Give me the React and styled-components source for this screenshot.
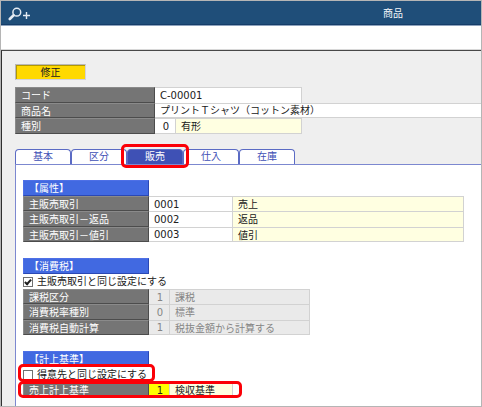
import React, { useState } from "react";
import styled, { createGlobalStyle, css } from "styled-components";

const GlobalStyle = createGlobalStyle`
  *, *::before, *::after { box-sizing: border-box; }
  body { margin: 0; background: #fff; }
  body, button, input, output {
    font-family: "DejaVu Sans", "Noto Sans CJK JP", sans-serif;
    font-size: 10px;
    line-height: 14px;
    color: #202020;
  }
`;

const Frame = styled.div`
  display: flex;
  flex-direction: column;
  min-height: 100vh;
  border: 1px solid #b5b5b5;
  background: #fff;
`;

const TitleBar = styled.header`
  display: flex;
  align-items: center;
  height: 25px;
  padding: 2px 0 0 7px;
  background: #1f4e79;
  border-bottom: 1px solid #8ea3bd;
  box-shadow: inset 0 -1px #153d69;
`;

const SearchButton = styled.button`
  display: flex;
  padding: 0;
  border: 0;
  background: none;
`;

const Title = styled.h1`
  flex: 1;
  margin: 0;
  padding-right: 78px;
  font-size: 10px;
  font-weight: 400;
  line-height: 22px;
  text-align: right;
  color: #f4f7fa;
`;

const Toolbar = styled.div`
  height: 24px;
  border-bottom: 1px solid #d8d8d8;
`;

const Body = styled.main`
  flex: 1;
  display: flex;
  flex-direction: column;
  padding: 13px 0 0 13px;
  border-top: 1px solid #484848;
  border-left: 1px solid #303030;
  background: #efefef;
`;

const ModeButton = styled.button`
  align-self: flex-start;
  width: 71px;
  height: 16px;
  padding: 0;
  border: 1px solid;
  border-color: #b8b8b8 #d2d2dc #d2d2dc #b8b8b8;
  background: #ffd900;
  box-shadow: inset 1px 1px #b39900;
  line-height: 13px;
`;

const Fields = styled.div`
  display: grid;
  grid-auto-rows: 1fr;
  height: ${(p) => (p.$single ? 16 : 46)}px;
`;

const Summary = styled(Fields)`
  height: 47px;
  margin: 7px 0 15px;
`;

const Row = styled.div`
  position: relative;
  display: flex;
  justify-self: ${(p) => (p.$fill ? "stretch" : "start")};
  min-width: 0;
  min-height: 0;
`;

const caption = css`
  padding-left: 5px;
  border: 1px solid;
  border-color: #8a8a8a #4c4c4c #4c4c4c #8a8a8a;
  background: #757575;
  color: #fff;
  line-height: 15px;
  white-space: nowrap;
  overflow: hidden;
`;

const Caption = styled.label`
  ${caption}
  width: ${(p) => (p.$wide ? 140 : 126)}px;
`;

const SectionTitle = styled.h2`
  ${caption}
  width: 126px;
  height: 16px;
  margin: 0;
  border-color: #4e70e6 #2a48b4 #2a48b4 #4e70e6;
  background: #4169e1;
  font-size: 10px;
  font-weight: 400;
`;

const widths = { code: 21, long: 84, short: 63, text: 147, kind: 126, tax: 140, name: 231 };
const tones = { plain: "#fff", note: "#ffffe1", active: "#ffff00", off: "#eaeaea" };

const box = css`
  width: ${(p) => widths[p.$size]}px;
  min-width: 0;
  min-height: 0;
  padding: 1px 0 0 5px;
  border: solid #d2d2d2;
  border-width: 1px 1px 0 0;
  border-radius: 0;
  background: ${(p) => tones[p.$tone || "plain"]};
  color: ${(p) => (p.$tone === "off" ? "#858585" : "#202020")};
  line-height: 14px;
  outline: none;
  ${Row}:last-child > & { border-bottom-width: 1px; }
`;

const Input = styled.input`
  ${box}
  ${(p) => p.$size === "code" && "padding: 1px 6px 0 0; text-align: right;"}
  ${(p) => p.$size === "fill" && "flex: 1; width: auto; border-right: 0; border-bottom-width: 1px;"}
`;

const Display = styled.output`
  ${box}
  display: block;
  white-space: nowrap;
  overflow: hidden;
`;

const Tabs = styled.div`
  display: flex;
  height: 15px;
`;

const Tab = styled.button`
  position: relative;
  width: 56px;
  padding: 0;
  border: 1px solid #5b6bc4;
  border-bottom: 0;
  border-radius: 4px 4px 0 0;
  background: ${(p) => (p.$active ? "#3f51b5" : "#fff")};
  color: ${(p) => (p.$active ? "#fff" : "#3f51b5")};
  line-height: 14px;
`;

const Panel = styled.div`
  flex: 1;
  display: flex;
  flex-direction: column;
  gap: 16px;
  padding: 15px 16px 6px 7px;
  border: solid #7c88d0;
  border-width: 1px 0 0 1px;
  background: #fff;
`;

const CheckRow = styled.label`
  position: relative;
  display: flex;
  align-items: center;
  gap: 4px;
  width: max-content;
  height: 15px;
`;

const Check = styled.input`
  appearance: none;
  display: grid;
  place-items: center;
  width: 10px;
  height: 10px;
  margin: 0;
  border: 1px solid #707070;
  background: #fff;
  &:checked::before {
    content: "";
    width: 4px;
    height: 7px;
    border: solid #202020;
    border-width: 0 2px 2px 0;
    transform: rotate(42deg);
  }
`;

const Highlight = styled.span`
  position: absolute;
  z-index: 1;
  inset: ${(p) => p.$inset};
  border: 3px solid #fb0007;
  border-radius: 5px;
  pointer-events: none;
`;

function SearchPlus() {
  return (
    <svg width="23" height="15" viewBox="0 0 23 15" fill="none" stroke="#e4ebf3">
      <circle cx="8.8" cy="5.2" r="3.9" strokeWidth="1.5" />
      <path d="M5.6 8.3 L1.8 12" strokeWidth="2.6" strokeLinecap="round" />
      <path d="M15 8.5 H22 M18.5 5 V12" strokeWidth="1.4" />
    </svg>
  );
}

function CodeRow({ id, label, code, name, size = "code", nameSize, tone, nameTone = "note", disabled, wide, children }) {
  return (
    <Row>
      <Caption htmlFor={id} $wide={wide}>{label}</Caption>
      <Input id={id} defaultValue={code} $size={size} $tone={tone} disabled={disabled} />
      <Display htmlFor={id} $size={nameSize} $tone={nameTone}>{name}</Display>
      {children}
    </Row>
  );
}

const tabNames = ["基本", "区分", "販売", "仕入", "在庫"];

export default function App() {
  const [active, setActive] = useState("販売");
  return (
    <>
      <GlobalStyle />
      <Frame>
        <TitleBar>
          <SearchButton aria-label="検索"><SearchPlus /></SearchButton>
          <Title>商品</Title>
        </TitleBar>
        <Toolbar />
        <Body>
          <ModeButton>修正</ModeButton>
          <Summary>
            <Row>
              <Caption htmlFor="item-code" $wide>コード</Caption>
              <Input id="item-code" defaultValue="C-00001" $size="text" />
            </Row>
            <Row $fill>
              <Caption htmlFor="item-name" $wide>商品名</Caption>
              <Input id="item-name" defaultValue="プリントＴシャツ（コットン素材）" $size="fill" />
            </Row>
            <CodeRow id="item-kind" label="種別" code="0" name="有形" nameSize="kind" wide />
          </Summary>
          <Tabs role="tablist">
            {tabNames.map((name) => (
              <Tab key={name} role="tab" aria-selected={name === active} $active={name === active} onClick={() => setActive(name)}>
                {name}
                {name === "販売" && <Highlight $inset="-6px -7px -4px -7px" />}
              </Tab>
            ))}
          </Tabs>
          <Panel role="tabpanel">
            <section>
              <SectionTitle>【属性】</SectionTitle>
              <Fields>
                <CodeRow id="deal" label="主販売取引" code="0001" name="売上" size="long" nameSize="name" />
                <CodeRow id="deal-return" label="主販売取引－返品" code="0002" name="返品" size="long" nameSize="name" />
                <CodeRow id="deal-discount" label="主販売取引－値引" code="0003" name="値引" size="long" nameSize="name" />
              </Fields>
            </section>
            <section>
              <SectionTitle>【消費税】</SectionTitle>
              <CheckRow>
                <Check type="checkbox" defaultChecked />
                主販売取引と同じ設定にする
              </CheckRow>
              <Fields>
                <CodeRow id="tax-class" label="課税区分" code="1" name="課税" nameSize="tax" tone="off" nameTone="off" disabled />
                <CodeRow id="tax-rate" label="消費税率種別" code="0" name="標準" nameSize="tax" tone="off" nameTone="off" disabled />
                <CodeRow id="tax-auto" label="消費税自動計算" code="1" name="税抜金額から計算する" nameSize="tax" tone="off" nameTone="off" disabled />
              </Fields>
            </section>
            <section>
              <SectionTitle>【計上基準】</SectionTitle>
              <CheckRow>
                <Check type="checkbox" />
                得意先と同じ設定にする
                <Highlight $inset="-3px -8px 0 -5px" />
              </CheckRow>
              <Fields $single>
                <CodeRow id="basis" label="売上計上基準" code="1" name="検収基準" nameSize="short" tone="active">
                  <Highlight $inset="-1px -9px 0 -5px" />
                </CodeRow>
              </Fields>
            </section>
          </Panel>
        </Body>
      </Frame>
    </>
  );
}
